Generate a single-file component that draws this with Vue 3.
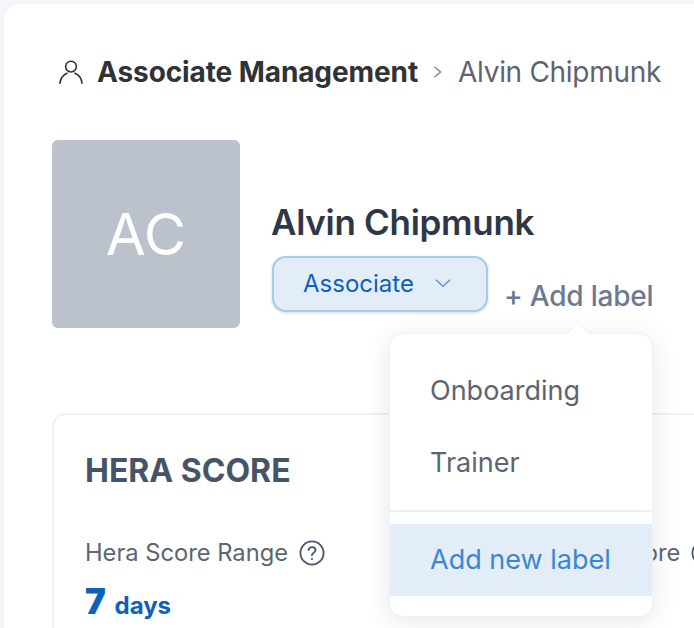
<script setup>
const labels = ["Onboarding", "Trainer"];
</script>

<template>
  <div class="page">
    <div class="panel">
      <div class="crumbs">
        <svg class="user-icon" viewBox="0 0 24 24" width="24" height="24" fill="none" stroke="#2f3237" stroke-width="1.6" stroke-linecap="round">
          <circle cx="12" cy="6.6" r="5.4" />
          <path d="M1 23.2c.5-4.8 3.4-8.4 7-10M23 23.2c-.5-4.8-3.4-8.4-7-10" />
        </svg>
        <span class="crumb-root">Associate Management</span>
        <svg class="crumb-sep" viewBox="0 0 12 14" width="12" height="14" fill="none" stroke="#7f8ea8" stroke-width="1.6">
          <path d="M2.5 2l6 5-6 5" />
        </svg>
        <span class="crumb-current">Alvin Chipmunk</span>
      </div>

      <div class="profile">
        <div class="avatar">AC</div>
        <div class="who">
          <h1 class="name">Alvin Chipmunk</h1>
          <div class="tags">
            <button class="role">
              Associate
              <svg viewBox="0 0 16 10" width="18" height="11" fill="none" stroke="#5b92cf" stroke-width="1.2">
                <path d="M1.5 1.5L8 7.5l6.5-6" />
              </svg>
            </button>
            <span class="add-label">+ Add label</span>
          </div>
        </div>
      </div>

      <div class="score-card">
        <h2 class="score-title">HERA SCORE</h2>
        <div class="score-cols">
          <div class="score-col">
            <div class="score-label">
              Hera Score Range
              <svg viewBox="0 0 26 26" width="26" height="26" fill="none" stroke="#4a5567" stroke-width="1.8">
                <circle cx="13" cy="13" r="11.6" />
                <path d="M9.6 10.2c.2-2 1.7-3 3.5-3 1.9 0 3.4 1.2 3.4 2.9 0 2.6-3.5 2.6-3.5 5.2" stroke-linecap="round" />
                <circle cx="13" cy="19" r="1" fill="#4a5567" stroke="none" />
              </svg>
            </div>
            <div class="score-value"><b>7</b> days</div>
          </div>
          <div class="score-col">
            <div class="score-label">
              Score
              <svg viewBox="0 0 26 26" width="26" height="26" fill="none" stroke="#4a5567" stroke-width="1.8">
                <circle cx="13" cy="13" r="11.6" />
              </svg>
            </div>
          </div>
        </div>
      </div>

      <div class="menu">
        <div class="menu-item" v-for="label in labels" :key="label">{{ label }}</div>
        <div class="menu-line"></div>
        <div class="menu-new">Add new label</div>
      </div>
    </div>
  </div>
</template>

<style>
html, body {
  margin: 0;
  background: #f4f6f9;
}
</style>

<style scoped>
.page {
  width: 694px;
  height: 628px;
  overflow: hidden;
  padding: 4px 0 0 4px;
  box-sizing: border-box;
  font-family: Inter, "Liberation Sans", sans-serif;
}
.panel {
  position: relative;
  width: 720px;
  height: 660px;
  background: #fff;
  border-radius: 16px 0 0 0;
  padding: 52px 0 0 48px;
  box-sizing: border-box;
}
.crumbs {
  display: flex;
  align-items: center;
  height: 32px;
  padding-left: 7px;
  font-size: 28px;
  letter-spacing: -0.1px;
}
.user-icon {
  margin-right: 14px;
}
.crumb-root {
  font-weight: 700;
  color: #2f3237;
}
.crumb-sep {
  margin: 0 14px 0 14px;
}
.crumb-current {
  color: #5d6470;
  letter-spacing: -0.3px;
}
.profile {
  display: flex;
  align-items: flex-end;
  margin-top: 52px;
}
.avatar {
  width: 188px;
  height: 188px;
  border-radius: 6px;
  background: #bcc2cc;
  color: #fff;
  font-size: 58px;
  display: flex;
  align-items: center;
  justify-content: center;
}
.who {
  margin-left: 32px;
  padding-bottom: 16px;
}
.name {
  margin: 0 0 15px -1px;
  font-size: 35px;
  line-height: 38px;
  font-weight: 600;
  color: #2d3748;
  letter-spacing: -0.3px;
}
.tags {
  display: flex;
  align-items: flex-end;
}
.role {
  display: flex;
  align-items: center;
  gap: 20px;
  width: 216px;
  height: 56px;
  padding: 0 0 2px 29px;
  box-sizing: border-box;
  background: #e3edf7;
  border: 2px solid #a5cdf0;
  border-radius: 14px;
  color: #0b62b8;
  font-family: inherit;
  font-size: 24px;
  font-weight: 400;
  box-shadow: 0 1px 3px rgba(45, 55, 72, 0.2);
}
.add-label {
  margin-left: 16px;
  font-size: 28px;
  line-height: 32px;
  font-weight: 500;
  color: #6b7a90;
  letter-spacing: -0.2px;
}
.score-card {
  margin-top: 85px;
  width: 720px;
  height: 300px;
  box-sizing: border-box;
  padding: 37px 31px;
  border: 2px solid #eef1f5;
  border-radius: 14px;
}
.score-title {
  margin: 0;
  font-size: 32px;
  line-height: 38px;
  font-weight: 700;
  color: #465468;
}
.score-cols {
  display: flex;
  margin-top: 48px;
}
.score-col:first-child {
  width: 530px;
}
.score-label {
  display: flex;
  align-items: center;
  gap: 11px;
  font-size: 23.7px;
  line-height: 30px;
  color: #5b6576;
  white-space: nowrap;
}
.score-value {
  margin-top: 12px;
  color: #0b62b8;
  font-size: 24px;
  font-weight: 700;
  line-height: 42px;
}
.score-value b {
  font-size: 35px;
  margin-right: 3px;
}
.menu {
  position: absolute;
  left: 385px;
  top: 329px;
  width: 264px;
  height: 284px;
  box-sizing: border-box;
  background: #fff;
  border: 1px solid #eef1f5;
  border-radius: 14px;
  box-shadow: 0 4px 24px rgba(45, 55, 72, 0.12);
}
.menu::before {
  content: "";
  position: absolute;
  left: 181px;
  top: -8px;
  width: 14px;
  height: 14px;
  background: #fff;
  transform: rotate(45deg);
  box-shadow: -1px -1px 1px rgba(45, 55, 72, 0.04);
}
.menu-item {
  height: 72px;
  padding-left: 40px;
  font-size: 27px;
  line-height: 72px;
  color: #5d6470;
  position: relative;
  top: 21px;
}
.menu-line {
  height: 2px;
  background: #ebf0f5;
  margin-top: 32px;
}
.menu-new {
  height: 72px;
  margin-top: 12px;
  padding-left: 40px;
  background: #e3edf7;
  font-size: 27px;
  line-height: 72px;
  color: #3a87d0;
}
</style>
